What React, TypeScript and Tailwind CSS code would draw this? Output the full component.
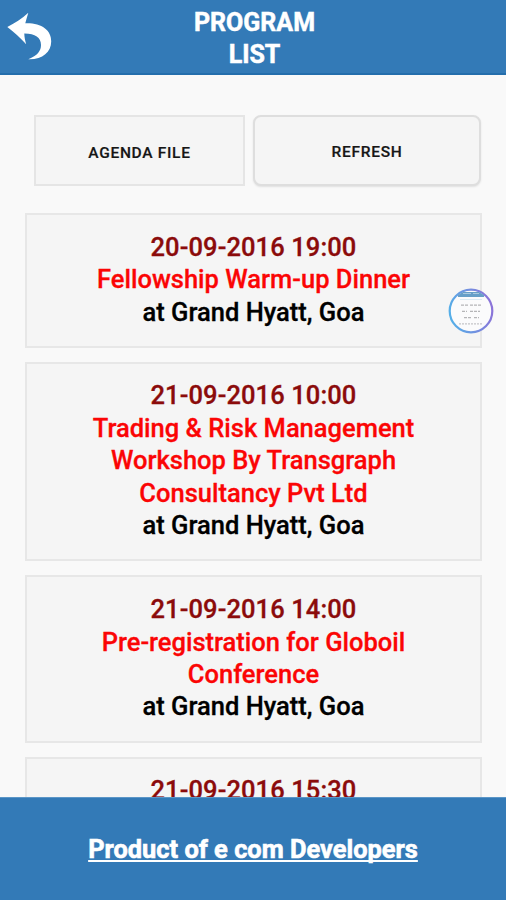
type Program = {
  date: string;
  title: string[];
  venue: string;
};

const programs: Program[] = [
  { date: "20-09-2016 19:00", title: ["Fellowship Warm-up Dinner"], venue: "at Grand Hyatt, Goa" },
  {
    date: "21-09-2016 10:00",
    title: ["Trading & Risk Management", "Workshop By Transgraph", "Consultancy Pvt Ltd"],
    venue: "at Grand Hyatt, Goa",
  },
  { date: "21-09-2016 14:00", title: ["Pre-registration for Globoil", "Conference"], venue: "at Grand Hyatt, Goa" },
  { date: "21-09-2016 15:30", title: [], venue: "" },
];

function Header() {
  return (
    <header className="grid h-[75px] shrink-0 grid-cols-[60px_1fr_60px] border-b-2 border-[#246eac] bg-[#337ab7]">
      <button aria-label="Back">
        <svg width="60" height="73" viewBox="0 0 60 73" fill="#fff">
          <path d="M7.3 27 C14.5 23.5 22 18.5 28.3 12.8 C27.2 16.7 26.1 20.2 25.3 23.3 C41 22.7 51.5 30 51.2 41.5 C51.2 52.5 42 59.7 28.3 59.2 C37.5 55.7 41 50.8 41 45 C41 37.5 35 33.5 24.3 33.6 C24.4 37.3 25.1 40.7 26.2 44.3 C20.7 38.1 14 32.2 7.3 27 Z" />
        </svg>
      </button>
      <h1 className="pt-[7px] pr-[1px] pl-[4px] text-center text-[25px] leading-[32.4px] font-bold text-white [-webkit-text-stroke:0.5px_#fff]">
        PROGRAM
        <br />
        LIST
      </h1>
    </header>
  );
}

function ProgramCard({ program }: { program: Program }) {
  return (
    <li className="border-2 border-[#e7e7e7] bg-[#f5f5f5] pt-[15.7px] pb-[17.9px] text-center text-[25.5px] leading-[32.4px] font-medium [-webkit-text-stroke-width:0.3px]">
      <div className="text-[#8b0b0b] tracking-[0.1px]">{program.date}</div>
      {program.title.map((line) => (
        <div key={line} className="text-[#fb0505]">
          {line}
        </div>
      ))}
      <div className="text-black">{program.venue}</div>
    </li>
  );
}

/* Floating shortcut with a tiny page preview */
function PreviewBubble() {
  return (
    <svg className="absolute top-[288px] left-[448px]" width="46" height="46" viewBox="0 0 46 46">
      <defs>
        <linearGradient id="ring" x1="0" y1="0.6" x2="1" y2="0.4">
          <stop offset="0" stopColor="#55afe8" />
          <stop offset="1" stopColor="#8c73d8" />
        </linearGradient>
        <clipPath id="page">
          <circle cx="23" cy="23" r="20.5" />
        </clipPath>
      </defs>
      <circle cx="23" cy="23" r="21.3" fill="#fbfbfc" stroke="url(#ring)" strokeWidth="2.2" />
      <g clipPath="url(#page)">
        <path d="M10 4h26v5H10z" fill="#669fc8" />
        <path d="M15 5.5h8M25 5.5h6" stroke="#a9c9df" />
        <path d="M13 17.2h7M22 17.2h11M14 23.3h5M22 23.3h10M16 29.7h7M26 29.7h5" stroke="#b5b5b7" strokeWidth="1.3" strokeDasharray="3 1" />
        <path d="M11 35.8h24" stroke="#c5c5c7" strokeWidth="1.3" strokeDasharray="2 1" />
        <path d="M12 11.5h22" stroke="#dcebf4" />
      </g>
    </svg>
  );
}

export default function App() {
  return (
    <div className="relative flex h-[900px] w-[506px] flex-col overflow-hidden bg-[#f9f9f9] font-['Roboto',sans-serif]">
      <Header />

      <main className="min-h-0 flex-1 overflow-hidden pt-[40px] pr-[24px] pl-[25px]">
        <div className="flex gap-2 pr-[1px] pl-[9px] text-[15.5px] font-medium tracking-[0.7px] text-[#161616] [-webkit-text-stroke-width:0.2px]">
          <button className="h-[71px] w-[211px] border-2 border-[#e5e5e5] bg-[#f5f5f5] pt-[7px]">AGENDA FILE</button>
          <button className="h-[71px] w-[228px] rounded-[8px] border-2 border-[#dedede] bg-[#f5f5f5] pt-[5px] shadow-[0_1px_2px_rgba(0,0,0,0.1)]">
            REFRESH
          </button>
        </div>

        <ul className="mt-[27px] flex flex-col gap-[14px]">
          {programs.map((program) => (
            <ProgramCard key={program.date} program={program} />
          ))}
        </ul>
      </main>

      <footer className="flex h-[103px] shrink-0 items-center justify-center border-t border-[#5b96c7] bg-[#337ab7]">
        <a
          href="#"
          className="text-[25.4px] font-bold text-white underline decoration-2 underline-offset-[2px] [text-decoration-skip-ink:none] [-webkit-text-stroke:0.6px_#fff]"
        >
          Product of e com Developers
        </a>
      </footer>

      <PreviewBubble />
    </div>
  );
}
